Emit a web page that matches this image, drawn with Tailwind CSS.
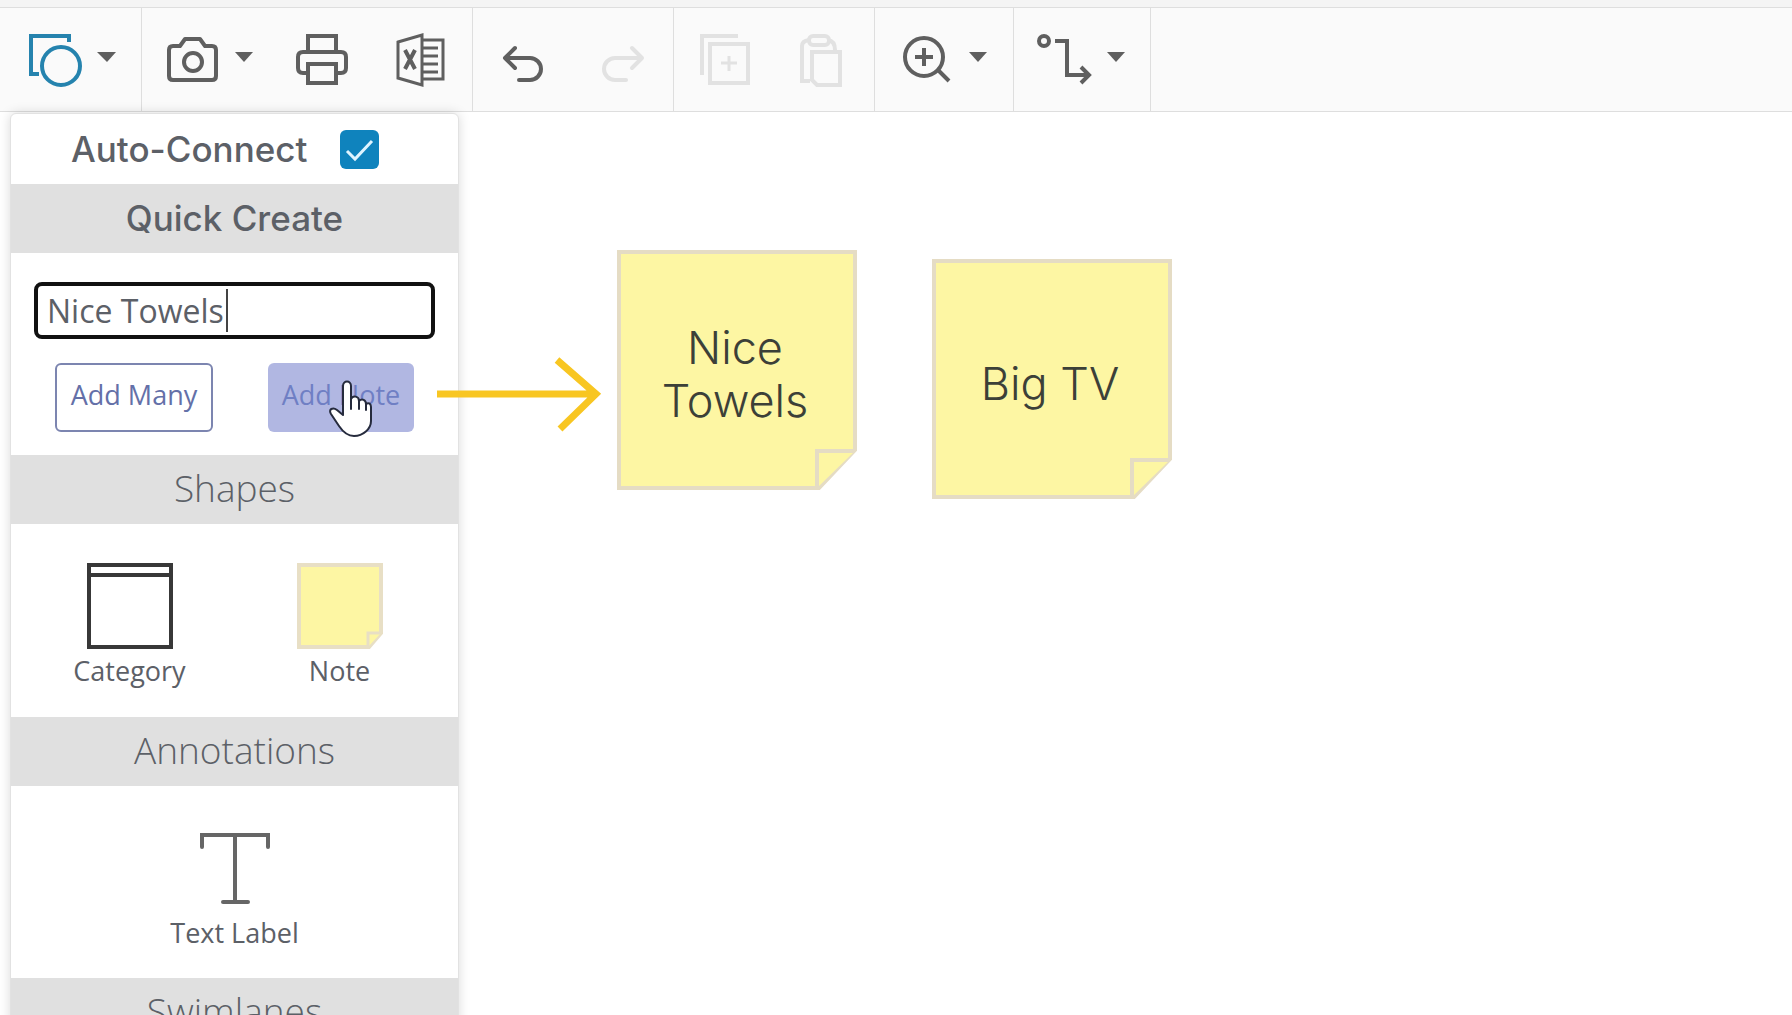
<!DOCTYPE html>
<html lang="en">
<head>
  <meta charset="UTF-8">
  <meta name="viewport" content="width=device-width, initial-scale=1.0">
  <title>Diagram Editor</title>

  <!-- Tailwind CSS -->
  <script src="https://cdn.jsdelivr.net/npm/@tailwindcss/browser@4"></script>
</head>
<body class="h-screen overflow-hidden flex flex-col bg-white text-[#5c6067] font-['Open_Sans',sans-serif]">

  <!-- Toolbar -->
  <header class="shrink-0 border-t-7 border-[#f4f4f4]">
    <div class="flex h-[105px] border-y border-[#dedede] bg-[#fafafa] text-[#5f5f5f]">
      <div class="flex items-center border-r border-[#dedede] pl-[27px] pr-6">
        <button type="button" aria-label="Shapes" class="flex items-center gap-[14px]">
          <svg class="size-14 text-[#2583ae]" viewBox="0 0 56 56" fill="none" stroke="currentColor" stroke-width="4">
            <path d="M42 10V4H4v38h8"/>
            <circle cx="34" cy="34" r="19"/>
          </svg>
          <svg class="w-5 h-14" viewBox="0 0 20 56" fill="currentColor"><path d="M0 20h19l-9 10z"/></svg>
        </button>
      </div>

      <div class="flex items-center gap-10 border-r border-[#dedede] pl-[22px] pr-[26px]">
        <button type="button" aria-label="Screenshot" class="flex items-center gap-[14px]">
          <svg class="size-14" viewBox="0 0 56 56" fill="none" stroke="currentColor" stroke-width="4" stroke-linejoin="round">
            <path d="M9 14h7l5-7h15l5 7h7q4 0 4 4v26q0 4-4 4H9q-4 0-4-4V18q0-4 4-4z"/>
            <circle cx="29" cy="30" r="9"/>
          </svg>
          <svg class="w-5 h-14" viewBox="0 0 20 56" fill="currentColor"><path d="M1 20h18l-9 10z"/></svg>
        </button>
        <button type="button" aria-label="Print">
          <svg class="size-14" viewBox="0 0 56 56" fill="none" stroke="currentColor" stroke-width="4">
            <path d="M14 20V4h28v16"/>
            <path d="M14 41H9q-5 0-5-5V25q0-5 5-5h38q5 0 5 5v11q0 5-5 5h-5"/>
            <path d="M14 32h28v19H14z"/>
          </svg>
        </button>
        <button type="button" aria-label="Export to Excel">
          <svg class="size-14" viewBox="0 0 56 56" fill="none" stroke="currentColor" stroke-width="3">
            <path d="M8 10l24-7v50L8 46z"/>
            <path d="M33 8h20v39H33M33 16h15M33 24h15M33 32h15M33 40h15"/>
            <path d="M15 18l10 19M25 18L15 37" stroke-width="4"/>
          </svg>
        </button>
      </div>

      <div class="flex items-center gap-10 border-r border-[#dedede] pl-[22px] pr-[26px]">
        <button type="button" aria-label="Undo">
          <svg class="size-14" viewBox="0 0 56 56" fill="none" stroke="currentColor" stroke-width="4" stroke-linecap="round" stroke-linejoin="round">
            <path d="M20 16L10 26l10 10M10 26h25a11 11 0 0 1 0 22H24"/>
          </svg>
        </button>
        <button type="button" aria-label="Redo" disabled>
          <svg class="size-14 text-[#e2e2e2]" viewBox="0 0 56 56" fill="none" stroke="currentColor" stroke-width="4" stroke-linecap="round" stroke-linejoin="round">
            <path d="M41 16l10 10-10 10M51 26H24a11 11 0 0 0 0 22h11"/>
          </svg>
        </button>
      </div>

      <div class="flex items-center gap-10 border-r border-[#dedede] pl-[22px] pr-[26px] text-[#e2e2e2]">
        <button type="button" aria-label="Duplicate" disabled>
          <svg class="size-14" viewBox="0 0 56 56" fill="none" stroke="currentColor" stroke-width="4">
            <path d="M42 4H6v39"/>
            <path d="M14 12h38v39H14z"/>
            <path d="M33 24v15M25 31h16" stroke-width="3"/>
          </svg>
        </button>
        <button type="button" aria-label="Paste" disabled>
          <svg class="size-14" viewBox="0 0 56 56" fill="none" stroke="currentColor" stroke-width="4">
            <path d="M18 49h-8V14q0-5 7-6M36 8q7 1 7 10"/>
            <rect x="17" y="4" width="20" height="9" rx="4"/>
            <path d="M20 20h28v33H25l-5-5z"/>
          </svg>
        </button>
      </div>

      <div class="flex items-center border-r border-[#dedede] pl-[22px] pr-[26px]">
        <button type="button" aria-label="Zoom" class="flex items-center gap-[14px]">
          <svg class="size-14" viewBox="0 0 56 56" fill="none" stroke="currentColor" stroke-width="4">
            <circle cx="27" cy="25" r="19"/>
            <path d="M41 38l11 11M27 16v18M18 25h18"/>
          </svg>
          <svg class="w-5 h-14" viewBox="0 0 20 56" fill="currentColor"><path d="M2 20h18l-9 10z"/></svg>
        </button>
      </div>

      <div class="flex items-center border-r border-[#dedede] pl-[22px] pr-6">
        <button type="button" aria-label="Connector style" class="flex items-center gap-[14px]">
          <svg class="size-14" viewBox="0 0 56 56" fill="none" stroke="currentColor" stroke-width="4">
            <circle cx="8" cy="9" r="5"/>
            <path d="M19 9h12v34h22M45 35l8 8-8 8"/>
          </svg>
          <svg class="w-5 h-14" viewBox="0 0 20 56" fill="currentColor"><path d="M1 20h18l-9 10z"/></svg>
        </button>
      </div>
    </div>
  </header>

  <main class="relative flex-1 min-h-0">

    <!-- Shape panel -->
    <aside class="absolute left-[10px] top-px w-[449px] rounded-t-md border border-[#e2e2e2] bg-white shadow-[0_0_12px_rgba(0,0,0,0.15)]">
      <label for="autoConnect" class="flex h-[70px] items-center gap-[34px] pl-[60px] font-['Inter',sans-serif] text-[35px] font-medium">
        <span class="w-[235px] whitespace-nowrap">Auto-Connect</span>
        <span class="relative size-[39px]">
          <input id="autoConnect" type="checkbox" checked class="block size-[39px] appearance-none rounded-md bg-[#0f83bd]">
          <svg class="pointer-events-none absolute inset-0 size-[39px]" viewBox="0 0 39 39" fill="none" stroke="#dff4ff" stroke-width="3"><path d="M7 21l8 8 17-18"/></svg>
        </span>
      </label>

      <h2 class="flex h-[69px] items-center justify-center bg-[#e0e0e0] font-['Inter',sans-serif] text-[35px] font-medium">Quick Create</h2>
      <div class="px-[23px] pt-[29px] pb-[23px]">
        <div class="relative">
          <input type="text" aria-label="Note text" value="Nice Towels" class="block h-[57px] w-full rounded-lg border-4 border-[#111] bg-white px-[9px] text-[32px] caret-transparent outline-none">
          <span class="absolute left-[192px] top-[7px] h-[43px] w-[2px] bg-[#444]"></span>
        </div>
        <div class="mt-6 flex justify-between px-[21px] text-[27px] text-[#6470a8]">
          <button type="button" class="h-[69px] w-[158px] rounded-md border-2 border-[#7c85b0] bg-white pb-1 whitespace-nowrap">Add Many</button>
          <button type="button" class="relative h-[69px] w-[146px] rounded-md bg-[#b1b7e2] pb-1 whitespace-nowrap text-[#6f7fc4]">
            Add Note
            <!-- Hand pointer -->
            <svg class="absolute left-[61px] top-[17px] h-[58px] w-[45px]" viewBox="0 0 45 58" fill="#fff" stroke="#262b3d" stroke-width="2" stroke-linejoin="round" stroke-linecap="round">
              <path d="M14 35V6c0-6 8-6 8 0v13c2-4 8-3 8 2 3-3 7-1 7 3 3-2 5 0 5 3v14c0 8-8 15-17 15-7 0-11-4-15-10L2 34c-3-5 2-7 6-4l6 5z"/>
              <path d="M22 19v10M30 21v8M37 24v6" fill="none"/>
            </svg>
          </button>
        </div>
      </div>

      <h2 class="flex h-[69px] items-center justify-center bg-[#e0e0e0] pb-1 text-[37px] font-light">Shapes</h2>
      <div class="flex h-[193px] justify-center gap-[62px] pt-[39px] text-[27px] leading-[44px]">
        <button type="button" class="flex w-[148px] flex-col items-center">
          <svg class="size-[86px]" viewBox="0 0 86 86" fill="none" stroke="#383838" stroke-width="4"><path d="M2 2h82v82H2zM2 12h82"/></svg>
          Category
        </button>
        <button type="button" class="flex w-[148px] flex-col items-center">
          <svg class="size-[86px]" viewBox="0 0 86 86" fill="#fdf6a3" stroke="#e8dfc5" stroke-width="4"><path d="M2 2h82v68L72 84H2z"/><path d="M84 70H71v14" stroke-width="3"/></svg>
          Note
        </button>
      </div>

      <h2 class="flex h-[69px] items-center justify-center bg-[#e0e0e0] pb-1 text-[37px] font-light">Annotations</h2>
      <div class="flex h-[192px] justify-center pt-[39px] text-[27px] leading-[44px]">
        <button type="button" class="flex w-[148px] flex-col items-center whitespace-nowrap">
          <svg class="size-[86px]" viewBox="0 0 86 86" fill="none" stroke="#666" stroke-width="4" stroke-linecap="round"><path d="M10 22V10h66v12M43 10v67M31 77h25"/></svg>
          Text Label
        </button>
      </div>

      <h2 class="flex h-[69px] items-center justify-center bg-[#e0e0e0] pb-1 text-[37px] font-light">Swimlanes</h2>
    </aside>

    <!-- Canvas: pointer arrow and notes -->
    <svg class="absolute left-[434px] top-[240px] h-[82px] w-[170px]" viewBox="0 0 170 82" fill="none" stroke="#f8c622" stroke-width="7"><path d="M3 42h158M123 8l39 34-36 35"/></svg>

    <article class="absolute left-[617px] top-[138px] flex size-60 items-center justify-center">
      <svg class="absolute inset-0 size-60" viewBox="0 0 240 240" fill="#fdf6a3" stroke="#e5dcc4" stroke-width="4"><path d="M2 2h236v198l-36 38H2z"/><path d="M238 201h-38v37"/></svg>
      <p class="relative w-[200px] pt-2 pr-1 text-center font-['Inter',sans-serif] text-[45px] leading-[53px] font-light text-[#3c4038]">Nice<br>Towels</p>
    </article>
    <article class="absolute left-[932px] top-[147px] flex size-60 items-center justify-center">
      <svg class="absolute inset-0 size-60" viewBox="0 0 240 240" fill="#fdf6a3" stroke="#e5dcc4" stroke-width="4"><path d="M2 2h236v198l-36 38H2z"/><path d="M238 201h-38v37"/></svg>
      <p class="relative w-[200px] pt-2 pr-1 text-center font-['Inter',sans-serif] text-[45px] leading-[53px] font-light text-[#3c4038]">Big TV</p>
    </article>
  </main>

</body>
</html>
